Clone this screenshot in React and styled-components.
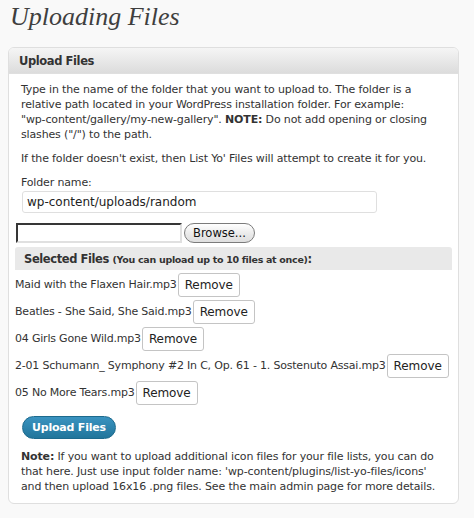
import React from "react";
import styled, { createGlobalStyle } from "styled-components";

const files = [
  "Maid with the Flaxen Hair.mp3",
  "Beatles - She Said, She Said.mp3",
  "04 Girls Gone Wild.mp3",
  "2-01 Schumann_ Symphony #2 In C, Op. 61 - 1. Sostenuto Assai.mp3",
  "05 No More Tears.mp3",
];

const GlobalStyle = createGlobalStyle`
  html, body {
    margin: 0;
    padding: 0;
    background: #f9f9f9;
  }
  body {
    font-family: "DejaVu Sans", "Liberation Sans", sans-serif;
    color: #333;
  }
`;

const Page = styled.div`
  width: 474px;
  height: 518px;
  padding: 0 15px 0 8px;
  box-sizing: border-box;
`;

const Title = styled.h2`
  margin: 0;
  padding: 2px 0 0 2px;
  height: 47px;
  box-sizing: border-box;
  font-family: "Liberation Serif", "DejaVu Serif", serif;
  font-style: italic;
  font-weight: normal;
  font-size: 26px;
  line-height: 30px;
  color: #3f3f3f;
`;

const Panel = styled.div`
  border: 1px solid #dfdfdf;
  border-radius: 6px;
  background: #fff;
  overflow: hidden;
`;

const PanelHead = styled.h3`
  margin: 0;
  height: 25px;
  padding: 0 10px;
  font-size: 11.5px;
  font-weight: bold;
  line-height: 27px;
  color: #333;
  background: linear-gradient(#f5f5f5, #dcdcdc);
  border-bottom: 1px solid #dfdfdf;
  letter-spacing: -0.4px;
`;

const PanelBody = styled.div`
  padding: 8px 6px 9px 6px;
`;

const Para = styled.p`
  margin: 0 0 9px 0;
  padding: 0 6px;
  font-size: 11px;
  line-height: 15px;
  letter-spacing: -0.15px;
  white-space: nowrap;
`;

const Label = styled.div`
  padding: 0 6px;
  font-size: 11px;
  line-height: 15px;
  letter-spacing: -0.15px;
  margin-bottom: 1px;
`;

const TextInput = styled.div`
  margin: 0 0 9px 7px;
  width: 355px;
  height: 22px;
  box-sizing: border-box;
  border: 1px solid #dfdfdf;
  border-radius: 3px;
  background: #fff;
  padding-left: 4px;
  font-size: 12px;
  line-height: 20px;
  color: #222;
`;

const FileRow = styled.div`
  display: flex;
  align-items: center;
  gap: 2px;
  height: 22px;
  margin-bottom: 3px;
`;

const FileBox = styled.div`
  width: 166px;
  height: 20px;
  box-sizing: border-box;
  border: 2px inset #d4d4d4;
  border-color: #8a8a8a #e0e0e0 #e0e0e0 #8a8a8a;
  background: #fff;
  margin-left: 1px;
`;

const Browse = styled.div`
  height: 20px;
  padding: 0 8px;
  box-sizing: border-box;
  border: 1px solid #7b7b7b;
  border-radius: 10px;
  background: linear-gradient(#ffffff, #ececec 50%, #dedede);
  font-size: 11.5px;
  line-height: 18px;
  color: #111;
`;

const SelectedHead = styled.div`
  height: 23px;
  background: #e9e9e9;
  border-radius: 3px 3px 0 0;
  padding-left: 9px;
  font-weight: bold;
  font-size: 11.5px;
  line-height: 24px;
  letter-spacing: -0.4px;
  color: #333;
`;

const Small = styled.span`
  font-size: 9.5px;
  letter-spacing: -0.3px;
`;

const Item = styled.div`
  display: flex;
  align-items: center;
  height: 25px;
  margin-top: 2px;
  font-size: 11px;
  letter-spacing: -0.2px;
  color: #333;
  white-space: nowrap;
`;

const Remove = styled.span`
  margin-left: 1px;
  height: 24px;
  box-sizing: border-box;
  padding: 0 6px;
  border: 1px solid #c4c4c4;
  border-radius: 3px;
  background: #fff;
  font-size: 12px;
  line-height: 22px;
  letter-spacing: -0.1px;
  color: #222;
`;

const Submit = styled.div`
  display: inline-block;
  margin: 11px 0 0 7px;
  height: 21px;
  padding: 0 9px;
  border-radius: 12px;
  background: linear-gradient(#3a93c0, #21759b);
  border: 1px solid #1d6a8d;
  color: #fff;
  font-weight: bold;
  font-size: 11px;
  line-height: 21px;
  letter-spacing: -0.2px;
`;

const Note = styled(Para)`
  margin: 10px 0 0 0;
`;

export default function App() {
  return (
    <Page>
      <GlobalStyle />
      <Title>Uploading Files</Title>
      <Panel>
        <PanelHead>Upload Files</PanelHead>
        <PanelBody>
          <Para>
            Type in the name of the folder that you want to upload to. The folder is a<br />
            relative path located in your WordPress installation folder. For example:<br />
            "wp-content/gallery/my-new-gallery". <b>NOTE:</b> Do not add opening or closing<br />
            slashes ("/") to the path.
          </Para>
          <Para>If the folder doesn't exist, then List Yo' Files will attempt to create it for you.</Para>
          <Label>Folder name:</Label>
          <TextInput>wp-content/uploads/random</TextInput>
          <FileRow>
            <FileBox />
            <Browse>Browse...</Browse>
          </FileRow>
          <SelectedHead>
            Selected Files <Small>(You can upload up to 10 files at once)</Small>:
          </SelectedHead>
          {files.map((f) => (
            <Item key={f}>
              {f}
              <Remove>Remove</Remove>
            </Item>
          ))}
          <Submit>Upload Files</Submit>
          <Note>
            <b>Note:</b> If you want to upload additional icon files for your file lists, you can do<br />
            that here. Just use input folder name: 'wp-content/plugins/list-yo-files/icons'<br />
            and then upload 16x16 .png files. See the main admin page for more details.
          </Note>
        </PanelBody>
      </Panel>
    </Page>
  );
}
